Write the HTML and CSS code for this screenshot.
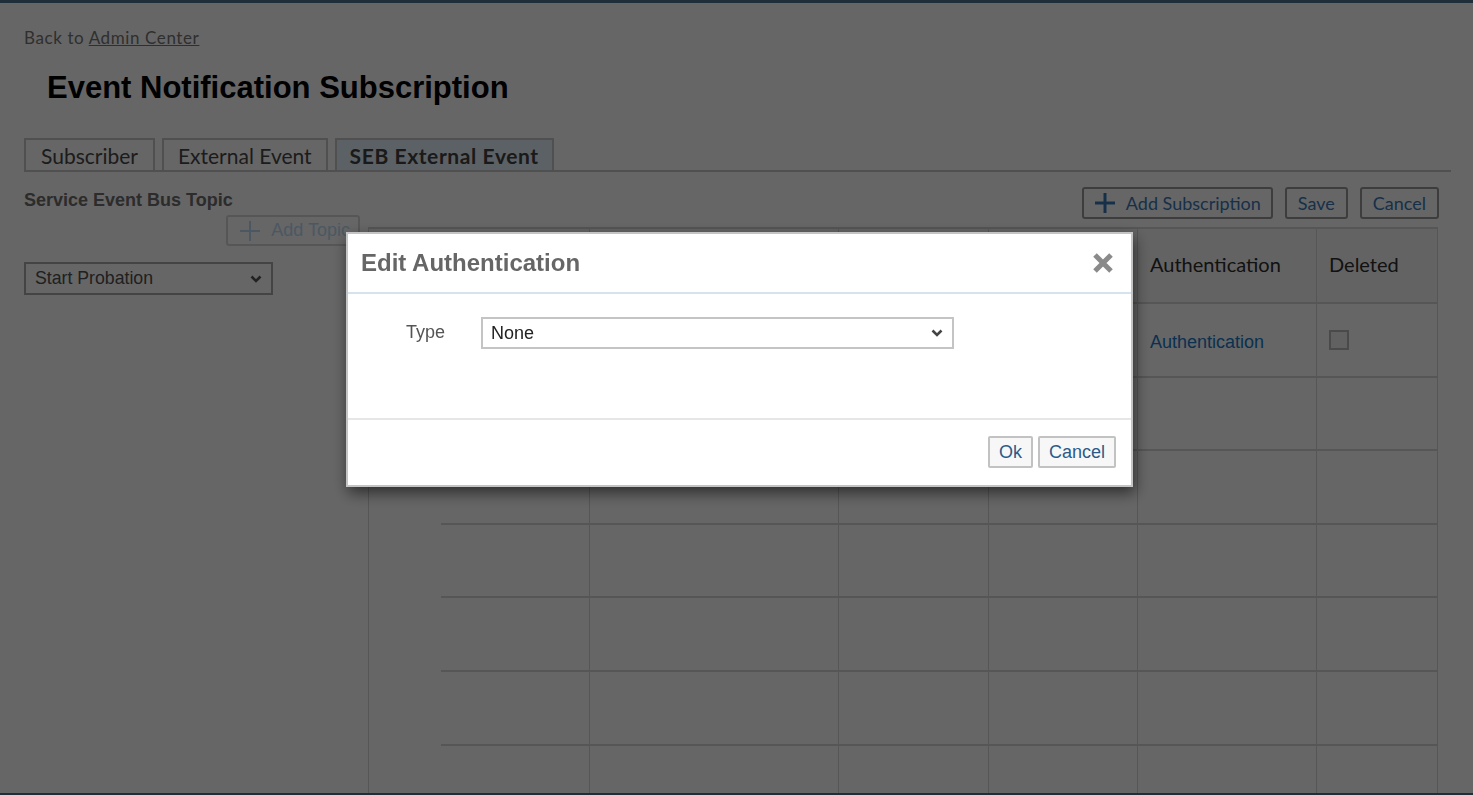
FILE: index.html
```html
<!DOCTYPE html>
<html lang="en">

<head>
    <meta charset="UTF-8">
    <meta name="viewport" content="width=device-width, initial-scale=1.0">
    <title>Event Notification Subscription</title>
    <link rel="stylesheet" href="styles.css">
</head>

<body>
    <div class="topbar"></div>
    <div class="page">
        <div class="back">Back to <a href="#">Admin Center</a></div>
        <h1 class="title">Event Notification Subscription</h1>

        <div class="tabs">
            <div class="tab">Subscriber</div>
            <div class="tab tab-narrow">External Event</div>
            <div class="tab tab-active">SEB External Event</div>
        </div>

        <div class="content">
            <div class="left-panel">
                <div class="panel-title">Service Event Bus Topic</div>
                <div class="topic-actions">
                    <button class="btn btn-disabled">
                        <svg width="22" height="22" viewBox="0 0 22 22"><path d="M11 1v20M1 11h20" stroke="currentColor" stroke-width="2" fill="none"/></svg>
                        Add Topic
                    </button>
                </div>
                <div class="select topic-select">
                    <span>Start Probation</span>
                    <svg width="12" height="8" viewBox="0 0 12 8"><path d="M1.5 1.5l4.5 4.5 4.5-4.5" stroke="currentColor" stroke-width="2.6" fill="none"/></svg>
                </div>
            </div>

            <div class="right-panel">
                <div class="toolbar">
                    <button class="btn btn-add">
                        <svg width="22" height="22" viewBox="0 0 22 22"><path d="M11 1v20M1 11h20" stroke="currentColor" stroke-width="3" fill="none"/></svg>
                        Add Subscription
                    </button>
                    <button class="btn">Save</button>
                    <button class="btn">Cancel</button>
                </div>
                <table class="grid">
                    <colgroup>
                        <col style="width:72px">
                        <col style="width:149px">
                        <col style="width:249px">
                        <col style="width:150px">
                        <col style="width:149px">
                        <col style="width:179px">
                        <col style="width:121px">
                    </colgroup>
                    <thead>
                        <tr>
                            <th class="gutter"></th>
                            <th></th>
                            <th></th>
                            <th></th>
                            <th></th>
                            <th>Authentication</th>
                            <th>Deleted</th>
                        </tr>
                    </thead>
                    <tbody>
                        <tr>
                            <td class="gutter"></td>
                            <td></td>
                            <td></td>
                            <td></td>
                            <td></td>
                            <td><a href="#">Authentication</a></td>
                            <td><span class="checkbox"></span></td>
                        </tr>
                        <tr><td class="gutter"></td><td></td><td></td><td></td><td></td><td></td><td></td></tr>
                        <tr><td class="gutter"></td><td></td><td></td><td></td><td></td><td></td><td></td></tr>
                        <tr><td class="gutter"></td><td></td><td></td><td></td><td></td><td></td><td></td></tr>
                        <tr><td class="gutter"></td><td></td><td></td><td></td><td></td><td></td><td></td></tr>
                        <tr><td class="gutter"></td><td></td><td></td><td></td><td></td><td></td><td></td></tr>
                        <tr><td class="gutter"></td><td></td><td></td><td></td><td></td><td></td><td></td></tr>
                    </tbody>
                </table>
            </div>
        </div>
    </div>
    <div class="bottombar"></div>

    <div class="overlay"></div>

    <div class="dialog">
        <div class="dialog-header">
            <span class="dialog-title">Edit Authentication</span>
            <svg class="dialog-close" width="22" height="22" viewBox="0 0 22 22"><path d="M3 3l16 16M19 3L3 19" stroke="currentColor" stroke-width="5" fill="none"/></svg>
        </div>
        <div class="dialog-body">
            <label class="field-label">Type</label>
            <div class="select type-select">
                <span>None</span>
                <svg width="12" height="8" viewBox="0 0 12 8"><path d="M1.5 1.5l4.5 4.5 4.5-4.5" stroke="currentColor" stroke-width="2.6" fill="none"/></svg>
            </div>
        </div>
        <div class="dialog-footer">
            <button class="dlg-btn">Ok</button>
            <button class="dlg-btn">Cancel</button>
        </div>
    </div>
</body>

</html>
```

FILE: styles.css
```css
body {
    margin: 0;
    height: 100vh;
    display: flex;
    flex-direction: column;
    overflow: hidden;
    background-color: #fff;
    font-family: Lato, "Noto Sans", sans-serif;
    color: #4b4b4b;
}

.topbar,
.bottombar {
    background-color: #4b7591;
    flex: none;
}

.topbar {
    height: 3px;
}

.bottombar {
    height: 2px;
}

.page {
    flex: 1;
    padding: 0 22px 0 24px;
    overflow: hidden;
}

.back {
    margin-top: 25px;
    font-size: 17px;
    line-height: 20px;
    letter-spacing: 0.6px;
    color: #767676;
}

.back a {
    color: #767676;
}

.title {
    margin: 22px 0 0 23px;
    font-family: "Liberation Sans", Arial, sans-serif;
    font-size: 31px;
    line-height: 36px;
    font-weight: bold;
    color: #000;
}

.tabs {
    display: flex;
    gap: 7px;
    margin-top: 32px;
    border-bottom: 2px solid #c8c8c8;
}

.tab {
    height: 30px;
    padding: 0 15px;
    border: 2px solid #c8c8c8;
    border-bottom: none;
    font-size: 21px;
    line-height: 32px;
    color: #484848;
}

.tab-narrow {
    padding: 0 14px;
}

.tab-active {
    padding: 0 13px;
    background-color: #e6f3fd;
    font-weight: bold;
    letter-spacing: 0.6px;
    color: #424242;
}

.content {
    display: flex;
}

.left-panel {
    width: 344px;
    flex: none;
}

.panel-title {
    margin-top: 18px;
    font-family: "Liberation Sans", Arial, sans-serif;
    font-size: 18px;
    font-weight: bold;
    line-height: 20px;
    color: #6e6e6e;
}

.topic-actions {
    display: flex;
    justify-content: flex-end;
    padding-right: 8px;
    margin-top: 5px;
}

.btn {
    display: flex;
    align-items: center;
    gap: 12px;
    height: 32px;
    padding: 0 11px;
    background-color: #fff;
    border: 2px solid #989898;
    border-radius: 3px;
    font-family: Lato, "Noto Sans", sans-serif;
    font-size: 18px;
    color: #3b78b8;
}

.btn-add {
    gap: 10px;
    padding: 0 10px;
}

.btn-disabled {
    height: 31px;
    border-color: #d8d8d8;
    color: #bcdcf5;
    font-family: "Liberation Sans", Arial, sans-serif;
    font-size: 18px;
    gap: 10px;
    padding: 0 8px 0 11px;
}

.select {
    display: flex;
    align-items: center;
    justify-content: space-between;
    box-sizing: border-box;
    border: 2px solid #aaaaaa;
    background-color: #fff;
    font-family: "Liberation Sans", Arial, sans-serif;
}

.topic-select {
    width: 249px;
    height: 33px;
    margin-top: 16px;
    padding: 0 9px 0 9px;
    font-size: 17.7px;
    color: #505050;
}

.topic-select svg {
    color: #555;
}

.right-panel {
    flex: 1;
}

.toolbar {
    display: flex;
    justify-content: flex-end;
    gap: 12px;
    margin-top: 15px;
    padding-right: 12px;
}

.grid {
    margin-top: 8px;
    border-collapse: collapse;
    table-layout: fixed;
    width: 1069px;
    background-color: #fff;
}

.grid th,
.grid td {
    border: none;
    border-right: 1px solid #d6d6d6;
    border-bottom: 2px solid #d6d6d6;
    padding: 0 12px;
    text-align: left;
    font-weight: normal;
}

.grid th {
    height: 75px;
    padding-bottom: 4px;
    box-sizing: border-box;
    border-top: 2px solid #d6d6d6;
    background-color: #f8f8f8;
    font-size: 20px;
    color: #2d2d2d;
}

.grid tbody tr {
    height: 73.6px;
}

.grid td {
    padding-top: 6px;
    color: #2d2d2d;
    font-family: "Liberation Sans", Arial, sans-serif;
    font-size: 18px;
}

.grid .gutter {
    border-left: 1px solid #d6d6d6;
    border-right: none;
    border-bottom: none;
    background-color: #fff;
}

.grid thead .gutter {
    border-bottom: 2px solid #d6d6d6;
    background-color: #f8f8f8;
}

.grid a {
    color: #1a7ac8;
    text-decoration: none;
}

.checkbox {
    display: block;
    width: 16px;
    height: 16px;
    margin-top: -6px;
    border: 2px solid #b8b8b8;
    background-color: #f2f2f2;
}

.overlay {
    position: fixed;
    inset: 0;
    background-color: rgba(0, 0, 0, 0.6);
}

.dialog {
    position: fixed;
    left: 346px;
    top: 232px;
    width: 783px;
    height: 251px;
    display: flex;
    flex-direction: column;
    background-color: #fff;
    border: 2px solid #c4c4c4;
    box-shadow: 2px 6px 14px rgba(0, 0, 0, 0.55);
    font-family: "Liberation Sans", Arial, sans-serif;
}

.dialog-header {
    height: 58px;
    display: flex;
    align-items: center;
    justify-content: space-between;
    padding: 0 17px 0 13px;
    border-bottom: 2px solid #d5e3ef;
}

.dialog-title {
    font-size: 24px;
    font-weight: bold;
    color: #666;
}

.dialog-close {
    color: #8a8a8a;
}

.dialog-body {
    height: 126px;
    display: flex;
    align-items: flex-start;
    padding: 23px 0 0 58px;
    box-sizing: border-box;
    border-bottom: 2px solid #e6e6e6;
}

.field-label {
    width: 75px;
    font-size: 18px;
    line-height: 31px;
    color: #555;
}

.type-select {
    width: 473px;
    height: 32px;
    padding: 0 9px 0 8px;
    border-color: #c4c4c4;
    font-size: 18px;
    color: #222;
}

.type-select svg {
    color: #444;
}

.dialog-footer {
    flex: 1;
    display: flex;
    justify-content: flex-end;
    align-items: flex-start;
    gap: 5px;
    padding: 16px 15px 0 0;
}

.dlg-btn {
    height: 32px;
    padding: 0 9px;
    background-color: #f7f7f7;
    border: 2px solid #c2c2c2;
    border-radius: 2px;
    font-family: "Liberation Sans", Arial, sans-serif;
    font-size: 18px;
    color: #2c5a88;
}
```
